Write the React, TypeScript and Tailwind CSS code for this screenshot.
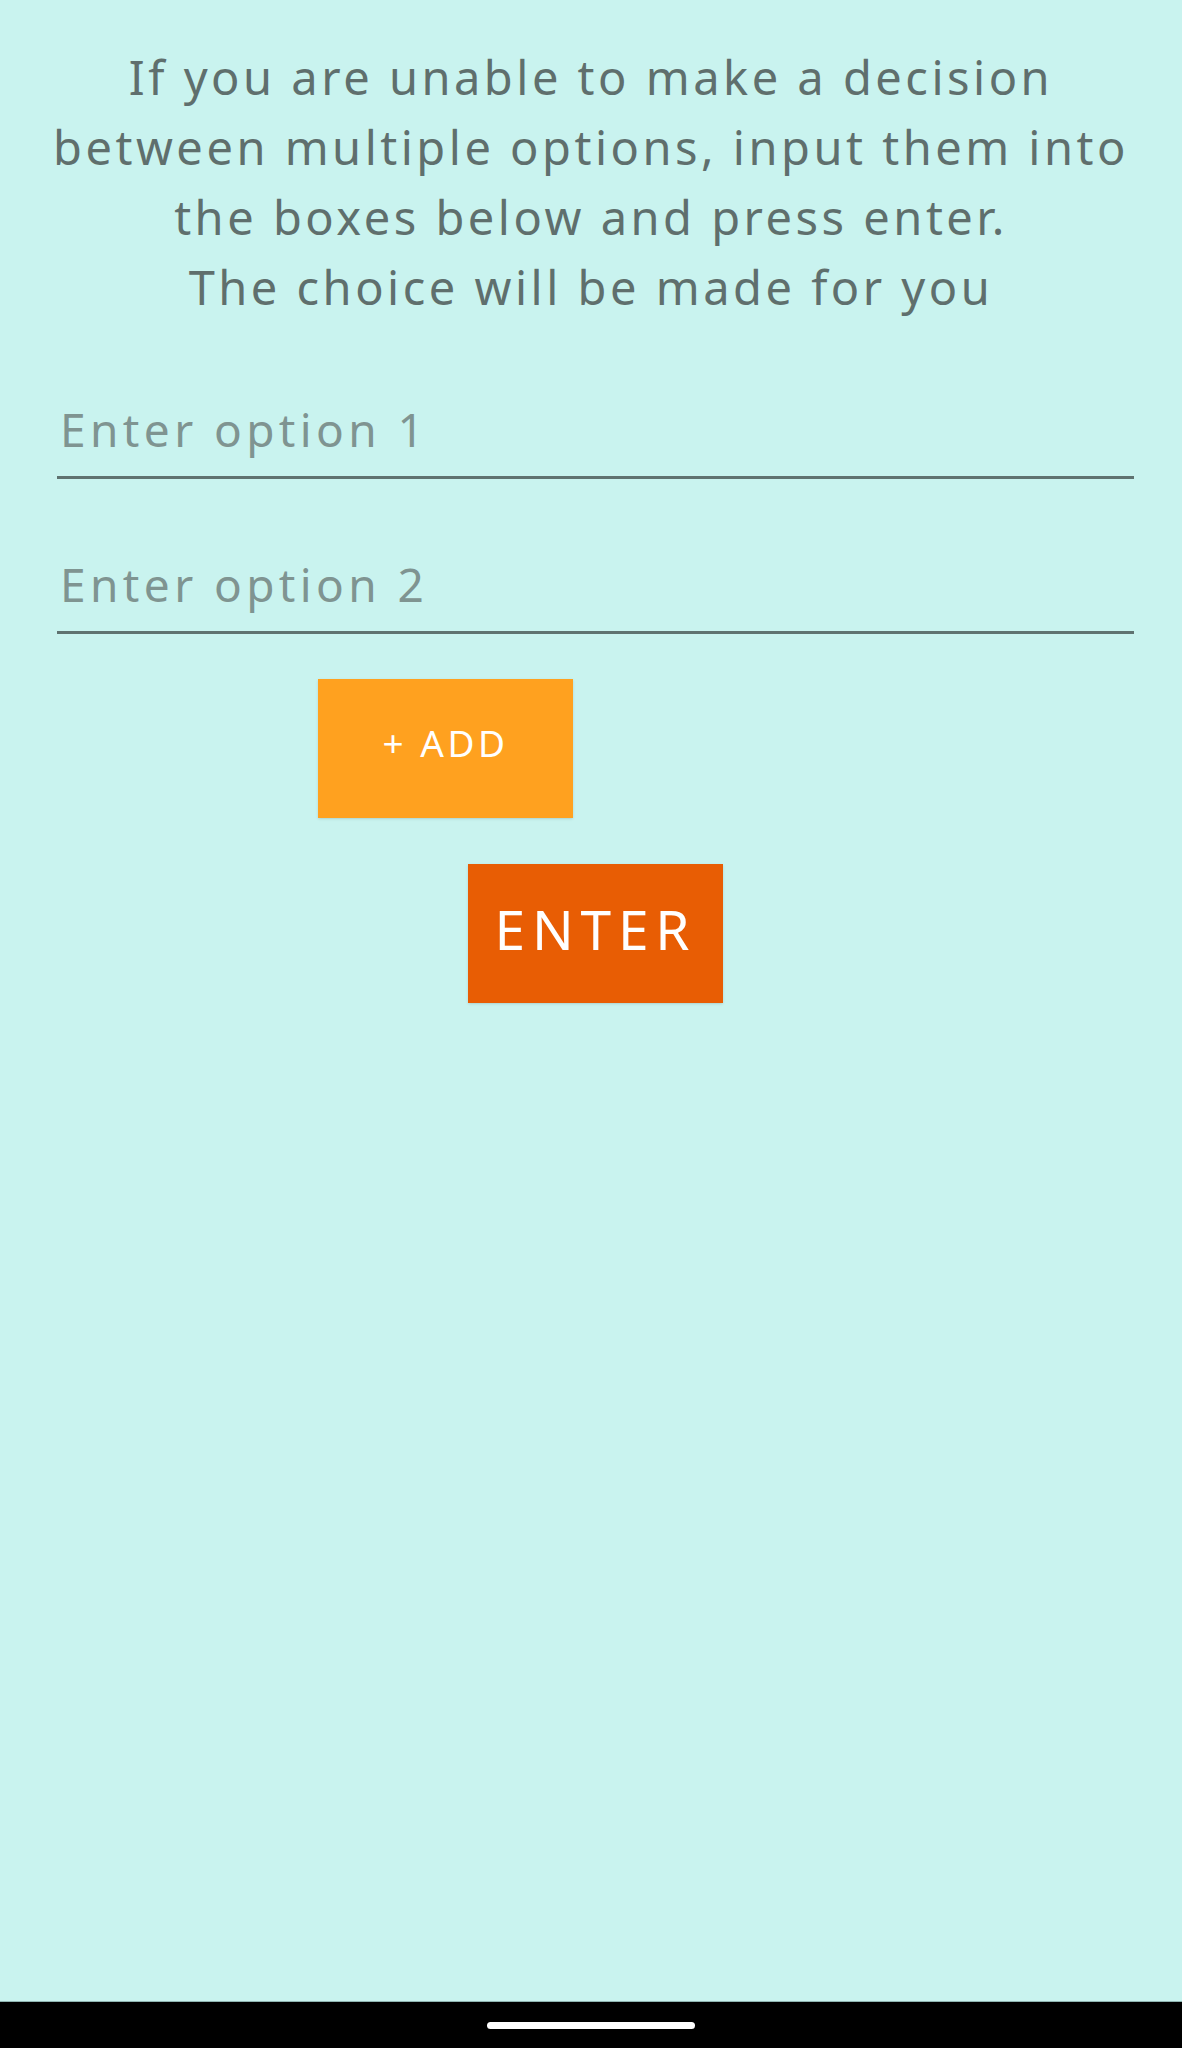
import React from "react";

export default function App() {
  return (
    <div
      className="w-[1182px] h-[2048px] flex flex-col bg-[#c9f3ef]"
      style={{ fontFamily: '"Noto Sans", "Open Sans", sans-serif' }}
    >
      <div className="flex-1 flex flex-col">
        <p className="mt-[42px] text-center text-[47px] leading-[70px] text-[#5f6f6d] tracking-[3.5px]">
          If you are unable to make a decision
          <br />
          between multiple options, input them into
          <br />
          the boxes below and press enter.
          <br />
          The choice will be made for you
        </p>

        <div className="ml-[57px] mr-[48px] mt-[77px] flex flex-col gap-[75px]">
          <div className="border-b-[3px] border-[#5f7270] pb-[17px]">
            <div className="pl-[3px] text-[46px] leading-[60px] text-[#7f9491] tracking-[4.4px]">
              Enter option 1
            </div>
          </div>
          <div className="border-b-[3px] border-[#5f7270] pb-[17px]">
            <div className="pl-[3px] text-[46px] leading-[60px] text-[#7f9491] tracking-[4.4px]">
              Enter option 2
            </div>
          </div>
        </div>

        <div className="mt-[45px] ml-[318px] w-[255px] h-[139px] bg-[#ffa11f] shadow-sm flex items-center justify-center pb-[12px]">
          <span className="text-white text-[37px] tracking-[3.5px]">+ ADD</span>
        </div>

        <div className="mt-[46px] ml-[468px] w-[255px] h-[139px] bg-[#e85d04] shadow-sm flex items-center justify-center pb-[8px]">
          <span className="text-white text-[55px] tracking-[6.8px]">ENTER</span>
        </div>
      </div>

      <div className="h-[47px] bg-black border-t border-[#8fb5b1] flex items-center justify-center">
        <div className="w-[208px] h-[7px] rounded-full bg-white" />
      </div>
    </div>
  );
}
